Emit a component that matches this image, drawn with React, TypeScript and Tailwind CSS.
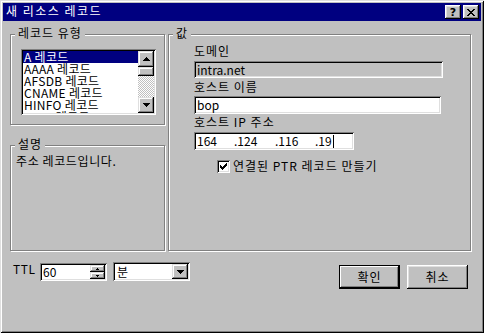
import React from "react";

function UpArrow() {
  return (
    <svg width="7" height="4" viewBox="0 0 7 4" shapeRendering="crispEdges">
      <path d="M3 0h1v1h1v1h1v1h1v1H0V3h1V2h1V1h1z" fill="#000" />
    </svg>
  );
}
function DownArrow() {
  return (
    <svg width="7" height="4" viewBox="0 0 7 4" shapeRendering="crispEdges">
      <path d="M0 0h7v1h-1v1h-1v1h-1v1h-1V3H2V2H1V1H0z" fill="#000" />
    </svg>
  );
}
function TinyUp() {
  return (
    <svg width="3" height="2" viewBox="0 0 3 2" shapeRendering="crispEdges">
      <path d="M1 0h1v1h1v1H0V1h1z" fill="#000" />
    </svg>
  );
}
function TinyDown() {
  return (
    <svg width="3" height="2" viewBox="0 0 3 2" shapeRendering="crispEdges">
      <path d="M0 0h3v1H2v1H1V1H0z" fill="#000" />
    </svg>
  );
}
function XIcon() {
  return (
    <svg width="8" height="7" viewBox="0 0 8 7" shapeRendering="crispEdges">
      <path
        d="M0 0h2v1H0zM6 0h2v1H6zM1 1h2v1H1zM5 1h2v1H5zM2 2h4v1H2zM3 3h2v1H3zM2 4h4v1H2zM1 5h2v1H1zM5 5h2v1H5zM0 6h2v1H0zM6 6h2v1H6z"
        fill="#000"
      />
    </svg>
  );
}
function Check() {
  return (
    <svg width="7" height="7" viewBox="0 0 7 7" shapeRendering="crispEdges">
      <path
        d="M6 0h1v1H6zM5 1h2v1H5zM0 2h1v1H0zM4 2h3v1H4zM0 3h2v1H0zM3 3h3v1H3zM0 4h5v1H0zM1 5h3v1H1zM2 6h1v1H2z"
        fill="#000"
      />
    </svg>
  );
}

function Group({
  label,
  className,
  children,
}: {
  label: string;
  className: string;
  children?: React.ReactNode;
}) {
  return (
    <div
      className={`relative border border-[#808080] shadow-[inset_1px_1px_0_#fff,1px_1px_0_#fff] ${className}`}
    >
      <span className="absolute left-[4px] top-[-8px] bg-[#c0c0c0] px-[3px] leading-[12px] tracking-[1px] whitespace-nowrap">
        {label}
      </span>
      {children}
    </div>
  );
}

const items = ["A 레코드", "AAAA 레코드", "AFSDB 레코드", "CNAME 레코드", "HINFO 레코드", "ISDN 레코드"];

export default function App() {
  return (
    <div className="w-[484px] h-[333px] bg-[#c0c0c0] p-[3px] flex flex-col font-['Noto_Sans_CJK_KR',sans-serif] text-[12px] leading-[12px] text-black shadow-[inset_1px_1px_0_#dfdfdf,inset_-1px_-1px_0_#000,inset_2px_2px_0_#fff,inset_-2px_-2px_0_#808080]">
      {/* Title bar */}
      <div className="h-[18px] bg-[#000080] flex items-start justify-between">
        <span className="text-white pl-[3px] pt-[2px] tracking-[1.5px] whitespace-nowrap">새 리소스 레코드</span>
        <div className="flex gap-[2px] pt-[2px] pr-[2px]">
          <div className="w-[16px] h-[14px] bg-[#c0c0c0] shadow-[inset_-1px_-1px_0_#000,inset_1px_1px_0_#fff,inset_-2px_-2px_0_#808080,inset_2px_2px_0_#dfdfdf] flex items-center justify-center font-['DejaVu_Sans',sans-serif] font-bold text-[11px] leading-[11px]">
            ?
          </div>
          <div className="w-[16px] h-[14px] bg-[#c0c0c0] shadow-[inset_-1px_-1px_0_#000,inset_1px_1px_0_#fff,inset_-2px_-2px_0_#808080,inset_2px_2px_0_#dfdfdf] flex items-center justify-center">
            <XIcon />
          </div>
        </div>
      </div>

      {/* Body */}
      <div className="flex flex-col pl-[7px] pt-[13px]">
        <div className="flex">
          <div className="w-[155px] flex flex-col">
            <Group label="레코드 유형" className="h-[91px]">
              <div className="ml-[10px] mt-[14px] w-[135px] h-[66px] bg-white p-[2px] flex shadow-[inset_1px_1px_0_#808080,inset_-1px_-1px_0_#fff,inset_2px_2px_0_#000,inset_-2px_-2px_0_#dfdfdf]">
                <div className="flex-1 flex flex-col overflow-hidden">
                  {items.map((t, i) => (
                    <div
                      key={t}
                      className={`h-[12px] shrink-0 pl-[1px] tracking-[0.3px] whitespace-nowrap ${
                        i === 0 ? "bg-[#000080] text-white" : ""
                      }`}
                    >
                      {t}
                    </div>
                  ))}
                </div>
                <div className="w-[16px] flex flex-col">
                  <div className="h-[16px] bg-[#c0c0c0] shadow-[inset_-1px_-1px_0_#000,inset_1px_1px_0_#dfdfdf,inset_-2px_-2px_0_#808080,inset_2px_2px_0_#fff] flex items-center justify-center">
                    <UpArrow />
                  </div>
                  <div className="h-[9px] bg-[#c0c0c0] shadow-[inset_-1px_-1px_0_#000,inset_1px_1px_0_#dfdfdf,inset_-2px_-2px_0_#808080,inset_2px_2px_0_#fff]" />
                  <div className="flex-1 bg-[image:repeating-conic-gradient(#fff_0_25%,#c0c0c0_0_50%)] bg-[length:2px_2px]" />
                  <div className="h-[16px] bg-[#c0c0c0] shadow-[inset_-1px_-1px_0_#000,inset_1px_1px_0_#dfdfdf,inset_-2px_-2px_0_#808080,inset_2px_2px_0_#fff] flex items-center justify-center">
                    <DownArrow />
                  </div>
                </div>
              </div>
            </Group>
            <Group label="설명" className="mt-[20px] h-[106px]">
              <div className="pl-[5px] pt-[9px] tracking-[0.6px] whitespace-nowrap">주소 레코드입니다.</div>
            </Group>
          </div>

          <Group label="값" className="ml-[3px] w-[303px] h-[217px]">
            <div className="flex flex-col pl-[25px] pt-[10px] tracking-[1px]">
              <div>도메인</div>
              <div className="mt-[4px] w-[249px] h-[17px] bg-[#c0c0c0] pl-[3px] flex items-center tracking-normal shadow-[inset_1px_1px_0_#808080,inset_-1px_-1px_0_#fff,inset_2px_2px_0_#000,inset_-2px_-2px_0_#dfdfdf]">
                intra.net
              </div>
              <div className="mt-[3px]">호스트 이름</div>
              <div className="mt-[3px] w-[247px] h-[18px] bg-white pl-[3px] flex items-center tracking-normal shadow-[inset_1px_1px_0_#808080,inset_-1px_-1px_0_#fff,inset_2px_2px_0_#000,inset_-2px_-2px_0_#dfdfdf]">
                bop
              </div>
              <div className="mt-[2px]">호스트 IP 주소</div>
              <div className="mt-[4px] w-[160px] h-[18px] bg-white pl-[3px] flex items-center tracking-normal shadow-[inset_1px_1px_0_#808080,inset_-1px_-1px_0_#fff,inset_2px_2px_0_#000,inset_-2px_-2px_0_#dfdfdf]">
                <div className="w-[37px]">164</div>
                <div className="w-[41px]">.124</div>
                <div className="w-[40px]">.116</div>
                <div className="flex items-center">
                  <span>.19</span>
                  <span className="ml-[1px] w-[1px] h-[13px] bg-black" />
                </div>
              </div>
              <div className="mt-[10px] ml-[23px] flex items-start">
                <div className="w-[13px] h-[13px] bg-white flex items-center justify-center shadow-[inset_1px_1px_0_#808080,inset_-1px_-1px_0_#fff,inset_2px_2px_0_#000,inset_-2px_-2px_0_#dfdfdf]">
                  <Check />
                </div>
                <div className="ml-[3px] whitespace-nowrap">연결된 PTR 레코드 만들기</div>
              </div>
            </div>
          </Group>
        </div>

        {/* Bottom row */}
        <div className="mt-[11px] flex items-start">
          <div className="ml-[3px] mt-[1px] w-[27px] tracking-[0.5px]">TTL</div>
          <div className="mt-[1px] w-[67px] h-[18px] bg-white flex items-stretch p-[2px] shadow-[inset_1px_1px_0_#808080,inset_-1px_-1px_0_#fff,inset_2px_2px_0_#000,inset_-2px_-2px_0_#dfdfdf]">
            <div className="flex-1 pl-[1px] flex items-center">60</div>
            <div className="w-[15px] flex flex-col">
              <div className="flex-1 bg-[#c0c0c0] flex items-center justify-center shadow-[inset_-1px_-1px_0_#000,inset_1px_1px_0_#dfdfdf,inset_-2px_-2px_0_#808080,inset_2px_2px_0_#fff]">
                <TinyUp />
              </div>
              <div className="flex-1 bg-[#c0c0c0] flex items-center justify-center shadow-[inset_-1px_-1px_0_#000,inset_1px_1px_0_#dfdfdf,inset_-2px_-2px_0_#808080,inset_2px_2px_0_#fff]">
                <TinyDown />
              </div>
            </div>
          </div>
          <div className="ml-[6px] w-[77px] h-[19px] bg-white flex items-stretch p-[2px] shadow-[inset_1px_1px_0_#808080,inset_-1px_-1px_0_#fff,inset_2px_2px_0_#000,inset_-2px_-2px_0_#dfdfdf]">
            <div className="flex-1 pl-[2px] flex items-center">분</div>
            <div className="w-[16px] bg-[#c0c0c0] flex items-center justify-center shadow-[inset_-1px_-1px_0_#000,inset_1px_1px_0_#dfdfdf,inset_-2px_-2px_0_#808080,inset_2px_2px_0_#fff]">
              <DownArrow />
            </div>
          </div>
          <div className="flex-1" />
          <div className="mt-[3px] w-[61px] h-[24px] border border-black flex items-center justify-center tracking-[1px] shadow-[inset_-1px_-1px_0_#000,inset_1px_1px_0_#fff,inset_-2px_-2px_0_#808080]">
            확인
          </div>
          <div className="mt-[3px] ml-[7px] mr-[13px] w-[61px] h-[24px] flex items-center justify-center tracking-[1px] shadow-[inset_-1px_-1px_0_#000,inset_1px_1px_0_#fff,inset_-2px_-2px_0_#808080,inset_2px_2px_0_#dfdfdf]">
            취소
          </div>
        </div>
      </div>
    </div>
  );
}
